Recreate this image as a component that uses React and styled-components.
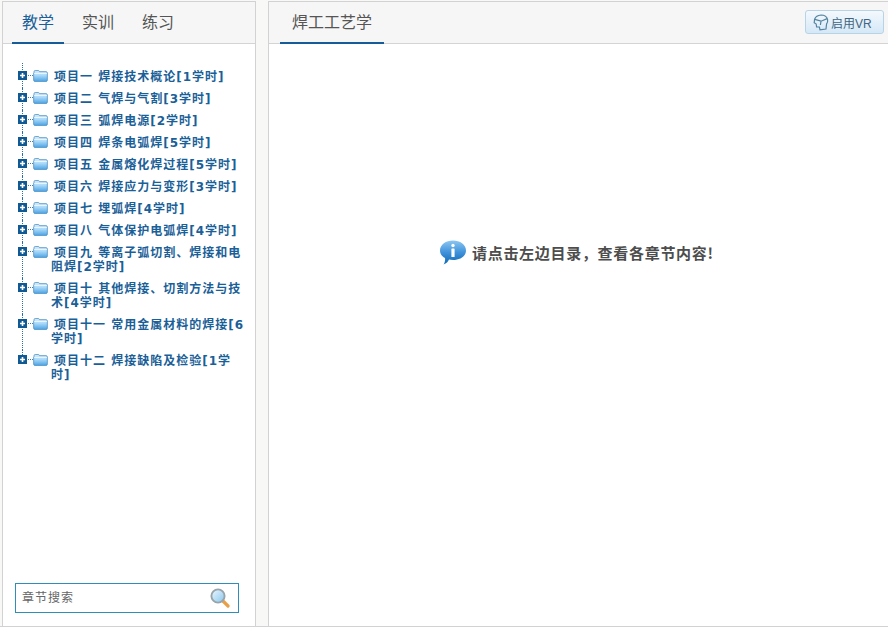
import React from 'react';
import styled, { createGlobalStyle } from 'styled-components';

const GlobalStyle = createGlobalStyle`
  html, body { margin: 0; padding: 0; background: #fff; }
  body { font-family: "Liberation Sans", "Noto Sans CJK SC", sans-serif; }
`;

const chapters = [
  '项目一 焊接技术概论[1学时]',
  '项目二 气焊与气割[3学时]',
  '项目三 弧焊电源[2学时]',
  '项目四 焊条电弧焊[5学时]',
  '项目五 金属熔化焊过程[5学时]',
  '项目六 焊接应力与变形[3学时]',
  '项目七 埋弧焊[4学时]',
  '项目八 气体保护电弧焊[4学时]',
  '项目九 等离子弧切割、焊接和电阻焊[2学时]',
  '项目十 其他焊接、切割方法与技术[4学时]',
  '项目十一 常用金属材料的焊接[6学时]',
  '项目十二 焊接缺陷及检验[1学时]',
];

const PlusIcon = () => (
  <svg width="15" height="9" viewBox="0 0 15 9">
    <rect width="9" height="9" fill="#0f5a94" />
    <path d="M2 4.5h5M4.5 2v5" stroke="#fff" strokeWidth="1.6" />
    <path d="M10 4.5h5" stroke="#3f7fae" strokeDasharray="1 1" />
  </svg>
);

const FolderIcon = () => (
  <svg width="15" height="12" viewBox="0 0 16 13">
    <defs>
      <linearGradient id="folderFill" x1="0" y1="0" x2="0" y2="1">
        <stop offset="0" stopColor="#d9effd" />
        <stop offset=".45" stopColor="#a9d8f8" />
        <stop offset="1" stopColor="#4ba3e6" />
      </linearGradient>
    </defs>
    <path
      d="M1 3V1.8Q1 .6 2.2 .6H5.6Q6.6 .6 7 1.8H14Q15.4 1.8 15.4 3.2V11Q15.4 12.4 14 12.4H2Q.6 12.4 .6 11V3.4Q.6 3 1 3Z"
      fill="url(#folderFill)"
      stroke="#4f93c6"
      strokeWidth=".9"
    />
    <path d="M1.2 3.7H15" stroke="#f0f9ff" strokeWidth="1" />
  </svg>
);

const SearchIcon = () => (
  <svg width="20" height="20" viewBox="0 0 20 20">
    <defs>
      <linearGradient id="lensFill" x1="0" y1="0" x2="1" y2="1">
        <stop offset="0" stopColor="#eef8fe" />
        <stop offset="1" stopColor="#86c6ee" />
      </linearGradient>
    </defs>
    <path d="M13 13L18 18" stroke="#e8a048" strokeWidth="3.2" strokeLinecap="round" />
    <circle cx="8" cy="8" r="6.6" fill="url(#lensFill)" stroke="#98a4ac" strokeWidth="1.9" />
  </svg>
);

const InfoIcon = () => (
  <svg width="28" height="27" viewBox="0 0 28 27">
    <defs>
      <linearGradient id="infoFill" x1="0" y1="0" x2="0" y2="1">
        <stop offset="0" stopColor="#8cc6f2" />
        <stop offset=".5" stopColor="#3f92da" />
        <stop offset="1" stopColor="#0f67b4" />
      </linearGradient>
    </defs>
    <path
      d="M14 1.5C21 1.5 27 5.5 27 11.5S21 21 14 21C12.5 21 11 20.8 10 20.5C9 22.5 7.5 24.5 4.5 25.5C6 23.5 6.3 21 6 19C3 17.5 1 15 1 11.5C1 5.5 7 1.5 14 1.5Z"
      fill="url(#infoFill)"
    />
    <circle cx="14" cy="6.5" r="1.7" fill="#fff" />
    <rect x="12.4" y="9.5" width="3.2" height="8.5" rx=".6" fill="#fff" />
  </svg>
);

const VrIcon = () => (
  <svg width="16" height="17" viewBox="0 0 16 17" fill="none" stroke="#55839f" strokeWidth="1.2">
    <path d="M1.6 5.2Q3 1.4 8 1Q13.4 1 14.6 5.6Q15 8 13.6 9.8L13 15L7 15.8L6.4 13H3.6L3.2 10L1.2 8.8Z" />
    <path d="M1.8 5.4L8 7.2L14.2 4.6M8 7.2L7.4 11" />
  </svg>
);

const App = () => (
  <>
    <GlobalStyle />
    <Page>
      <Sidebar>
        <TabBar>
          <Tab $active>教学</Tab>
          <Tab>实训</Tab>
          <Tab>练习</Tab>
        </TabBar>
        <TreeArea>
          <Tree>
            {chapters.map((name) => (
              <TreeRow key={name}>
                <Switch>
                  <PlusIcon />
                </Switch>
                <Folder>
                  <FolderIcon />
                </Folder>
                <Label>{name}</Label>
              </TreeRow>
            ))}
          </Tree>
          <SearchBox>
            <SearchInput placeholder="章节搜索" />
            <SearchIcon />
          </SearchBox>
        </TreeArea>
      </Sidebar>
      <Main>
        <TabBar>
          <MainTab>焊工工艺学</MainTab>
          <VrButton>
            <VrIcon />
            启用VR
          </VrButton>
        </TabBar>
        <Content>
          <Message>
            <InfoIcon />
            <MessageText>请点击左边目录，查看各章节内容!</MessageText>
          </Message>
        </Content>
      </Main>
    </Page>
  </>
);

const Page = styled.div`
  display: grid;
  grid-template-columns: 254px 620px;
  column-gap: 12px;
  height: 627px;
  padding-left: 2px;
  width: 888px;
  box-sizing: border-box;
  border-bottom: 1px solid #d2d2d2;
  background: #f8f8f6;
  overflow: hidden;
`;

const Sidebar = styled.div`
  display: flex;
  flex-direction: column;
  background: #fff;
  border-top: 1px solid #d2d2d2;
  border-left: 1px solid #d2d2d2;
  border-right: 1px solid #d2d2d2;
  margin-top: 1px;
  box-sizing: border-box;
  min-height: 0;
`;

const Main = styled(Sidebar)`
  border-right: none;
`;

const TabBar = styled.div`
  display: flex;
  align-items: stretch;
  flex: none;
  gap: 8px;
  height: 42px;
  padding-left: 9px;
  box-sizing: border-box;
  background: #f6f6f6;
  border-bottom: 1px solid #d4d4d4;
`;

const Tab = styled.div`
  width: 52px;
  height: 42px;
  line-height: 42px;
  text-align: center;
  box-sizing: border-box;
  font-size: 16px;
  color: ${(props) => (props.$active ? '#1b5f98' : '#555')};
  border-bottom: 2px solid ${(props) => (props.$active ? '#155c99' : 'transparent')};
`;

const MainTab = styled(Tab)`
  width: 104px;
  margin-left: 2px;
  color: #555;
  border-bottom-color: #155c99;
`;

const VrButton = styled.div`
  display: flex;
  align-items: center;
  gap: 2px;
  box-sizing: border-box;
  align-self: flex-start;
  margin: 8px 4px 0 auto;
  width: 79px;
  height: 24px;
  padding-left: 7px;
  font-size: 12px;
  color: #3f6580;
  border: 1px solid #b9d3e6;
  border-radius: 3px;
  background: linear-gradient(#f4f9fd, #d5e8f7);
`;

const TreeArea = styled.div`
  flex: 1;
  display: flex;
  flex-direction: column;
  min-height: 0;
`;

const Tree = styled.ul`
  flex: 1;
  list-style: none;
  margin: 0;
  padding: 22px 8px 0 15px;
`;

const TreeRow = styled.li`
  position: relative;
  display: flex;
  align-items: flex-start;
  padding: 4px 0;
  font-size: 12px;
  line-height: 14px;

  &::before {
    content: '';
    position: absolute;
    left: 4px;
    top: 0;
    bottom: 0;
    border-left: 1px dotted #2a6fa6;
  }

  &:first-child::before {
    top: -3px;
  }

  &:last-child::before {
    bottom: auto;
    height: 9px;
  }
`;

const Switch = styled.span`
  position: relative;
  z-index: 1;
  flex: none;
  display: flex;
  width: 15px;
  height: 13px;
  align-items: center;
  margin-top: -1px;
`;

const Folder = styled.span`
  flex: none;
  display: flex;
  width: 18px;
  height: 13px;
  margin-top: -1px;
  align-items: center;
`;

const Label = styled.span`
  font-family: "DejaVu Sans", "Noto Sans CJK SC", sans-serif;
  font-weight: bold;
  color: #1b5f98;
  letter-spacing: 1px;
  text-indent: 3px;
`;

const SearchBox = styled.div`
  flex: none;
  display: flex;
  align-items: center;
  box-sizing: border-box;
  width: 224px;
  height: 30px;
  margin: 0 0 13px 12px;
  padding: 0 8px 0 6px;
  border: 1px solid #2f8db9;
  background: #fff;
`;

const SearchInput = styled.input`
  flex: 1;
  min-width: 0;
  border: none;
  outline: none;
  padding: 0;
  font: 12px "Liberation Sans", "Noto Sans CJK SC", sans-serif;
  letter-spacing: 1px;
  color: #555;

  &::placeholder {
    color: #666;
    opacity: 1;
  }
`;

const Content = styled.div`
  flex: 1;
  background: #fff;
  padding-top: 195px;
`;

const Message = styled.div`
  display: flex;
  align-items: center;
  gap: 5px;
  margin-left: 170px;
`;

const MessageText = styled.span`
  font-size: 15px;
  font-weight: bold;
  letter-spacing: 0.7px;
  color: #4d4d4d;
  font-family: "Noto Sans CJK SC", sans-serif;
`;

export default App;
